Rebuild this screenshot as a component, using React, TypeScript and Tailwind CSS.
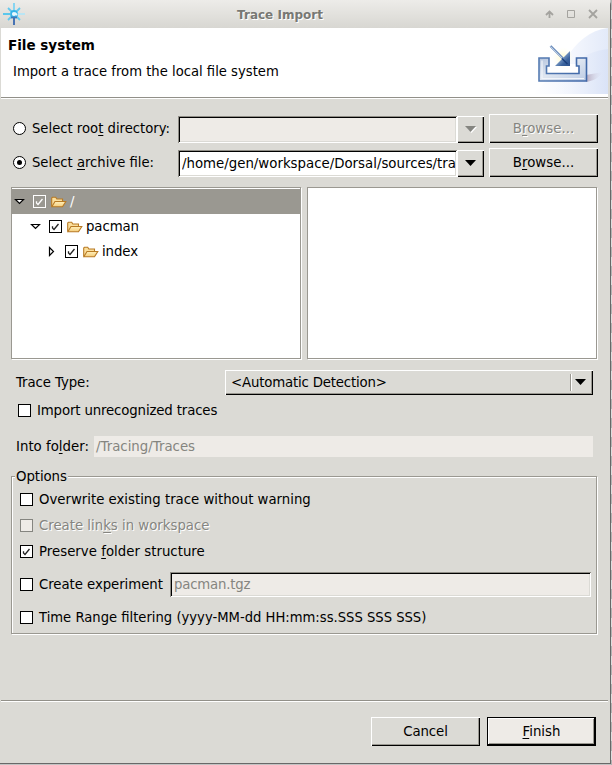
import type { ReactNode } from "react";

/* Bevelled frame helpers shared by buttons and fields */
const RAISED =
  "shadow-[inset_1px_1px_0_#fff,inset_-1px_-1px_0_#000,inset_-2px_-2px_0_#9a9891]";
const SUNKEN =
  "shadow-[inset_1px_1px_0_#8f8d86,inset_-1px_-1px_0_#fff,inset_2px_2px_0_#000,inset_-2px_-2px_0_#dbdad5]";
const ETCHED = "border border-[#9a9891] shadow-[1px_1px_0_#fff,inset_1px_1px_0_#fff]";
const DISABLED = "text-[#858580] [text-shadow:1px_1px_0_#fff]";

function Key({ children }: { children: ReactNode }) {
  return (
    <span className="underline decoration-1 underline-offset-2 [text-decoration-skip-ink:none]">{children}</span>
  );
}

function Button({ children, disabled }: { children: ReactNode; disabled?: boolean }) {
  return (
    <button className={`h-[29px] w-[109px] shrink-0 pb-px text-center ${RAISED} ${disabled ? DISABLED : ""}`}>
      {children}
    </button>
  );
}

function Check({ checked, tone = "normal" }: { checked?: boolean; tone?: "normal" | "disabled" | "selected" }) {
  const box =
    tone === "disabled"
      ? "border-[#858580] bg-[#eeebe7]"
      : tone === "selected"
        ? "border-white bg-[#9a9891]"
        : "border-black bg-white";
  return (
    <span className={`block size-[13px] shrink-0 border ${box}`}>
      {checked && (
        <svg width="11" height="11" viewBox="0 0 11 11" fill="none" className="block">
          <path d="M2.500 5.300V7L4 8.500L8.500 3" stroke={tone === "selected" ? "#fff" : "#222"} strokeWidth="1.3" />
        </svg>
      )}
    </span>
  );
}

function Radio({ checked }: { checked?: boolean }) {
  return (
    <span className="flex size-[13px] shrink-0 items-center justify-center rounded-full border border-black bg-white">
      {checked && <span className="size-[5px] rounded-full bg-black" />}
    </span>
  );
}

function Arrow({ color = "#000", light }: { color?: string; light?: boolean }) {
  return (
    <svg width="12" height="7" viewBox="0 0 12 7" className="block">
      {light && <path d="M1 1H12L6.5 7Z" fill="#fff" />}
      <path d="M0 0H11L5.5 6Z" fill={color} />
    </svg>
  );
}

function Folder() {
  return (
    <svg width="16" height="12" viewBox="0 0 16 12" className="block shrink-0">
      <defs>
        <linearGradient id="fold" x1="0" y1="0" x2="0" y2="1">
          <stop offset="0" stopColor="#fff0bd" />
          <stop offset="1" stopColor="#f4cc79" />
        </linearGradient>
      </defs>
      <path d="M0.700 10.500V2L1.500 1.200H4.700L5.800 3H11.500V6" fill="#fbdf9c" stroke="#b87a24" strokeWidth="1.1" />
      <path d="M0.800 10.700L4 5.500H14.800L11.500 10.700Z" fill="url(#fold)" stroke="#b87a24" strokeWidth="1.1" />
    </svg>
  );
}

function Expander({ open }: { open?: boolean }) {
  return (
    <svg width="11" height="11" viewBox="0 0 11 11" className="mb-px block shrink-0">
      {open ? (
        <path d="M1.500 3.500H9.500L5.500 7.500Z" fill="#fff" stroke="#000" strokeWidth="1.2" />
      ) : (
        <path d="M3.500 1.500V9.500L7.500 5.500Z" fill="#fff" stroke="#000" strokeWidth="1.2" />
      )}
    </svg>
  );
}

function TreeRow({ label, indent, open, selected }: { label: string; indent: string; open?: boolean; selected?: boolean }) {
  return (
    <div className={`flex h-[25px] items-center ${indent} ${selected ? "bg-[#9a9891] text-white" : ""}`}>
      <Expander open={open} />
      <span className="w-[8px] shrink-0" />
      <Check checked tone={selected ? "selected" : "normal"} />
      <span className="w-[5px] shrink-0" />
      <Folder />
      <span className="ml-[3px] pb-px tracking-[-0.1px]">{label}</span>
    </div>
  );
}

function PathRow({ label, value, active }: { label: ReactNode; value: string; active?: boolean }) {
  return (
    <div className="flex h-[29px] items-center">
      <Radio checked={active} />
      <span className="ml-[6px] w-[146px] shrink-0 whitespace-nowrap pb-px text-[13.2px]">{label}</span>
      <div
        className={`mt-px flex h-[27px] w-[279px] shrink-0 items-center overflow-hidden pl-[4px] pr-px ${SUNKEN} ${active ? "bg-white" : "bg-[#eeebe7]"}`}
      >
        <span className="block w-full overflow-hidden whitespace-nowrap">{value}</span>
      </div>
      <div className={`mt-px flex h-[27px] w-[27px] shrink-0 items-center justify-center ${RAISED}`}>
        <Arrow color={active ? "#000" : "#858580"} light={!active} />
      </div>
      <span className="w-[5px] shrink-0" />
      <Button disabled={!active}>
        B<Key>r</Key>owse...
      </Button>
    </div>
  );
}

function Option({ children, checked, disabled }: { children: ReactNode; checked?: boolean; disabled?: boolean }) {
  return (
    <div className="flex h-[17px] items-center whitespace-nowrap">
      <Check checked={checked} tone={disabled ? "disabled" : "normal"} />
      <span className={`ml-[6px] ${disabled ? DISABLED : ""}`}>{children}</span>
    </div>
  );
}

function AppLogo() {
  return (
    <svg width="22" height="24" viewBox="0 0 22 24" className="mt-px block">
      <g fill="none" strokeWidth="1.8">
        <path d="M11 0V7" stroke="#7dd3f2" />
        <path d="M0 11H7" stroke="#4cc4ee" />
        <path d="M15 11H22" stroke="#b5e6f7" />
        <path d="M5 5L9 9M17 5L13 9M5 17L9 13M13 13L17 17" stroke="#62c8ee" />
        <circle cx="11" cy="11" r="3" stroke="#35b4e8" strokeWidth="1.8" fill="#e8f8fe" />
        <path d="M12 10L14 12" stroke="#e8f8fe" />
        <path d="M11 14V22" stroke="#4773b4" strokeWidth="2" />
        <path d="M8 14.500H14" stroke="#3f77b8" />
      </g>
    </svg>
  );
}

function Banner() {
  return (
    <svg width="75" height="66" viewBox="0 0 75 66" className="block">
      <defs>
        <linearGradient id="sweep" x1="0" y1="0" x2="1" y2="0">
          <stop offset="0" stopColor="#fff" />
          <stop offset="0.55" stopColor="#f3f6fd" />
          <stop offset="1" stopColor="#e3eaf9" />
        </linearGradient>
        <linearGradient id="sweep2" x1="0" y1="0" x2="1" y2="0">
          <stop offset="0" stopColor="#f3f6fd" stopOpacity="0" />
          <stop offset="1" stopColor="#dae3f7" />
        </linearGradient>
        <linearGradient id="tray" x1="0" y1="0" x2="1" y2="1">
          <stop offset="0" stopColor="#b4c4dd" />
          <stop offset="0.45" stopColor="#e0e7f1" />
          <stop offset="1" stopColor="#bccbe4" />
        </linearGradient>
        <linearGradient id="edge" x1="0" y1="0" x2="1" y2="0">
          <stop offset="0" stopColor="#557bb2" />
          <stop offset="1" stopColor="#4068a8" />
        </linearGradient>
        <linearGradient id="head" x1="0" y1="0" x2="1" y2="1">
          <stop offset="0.3" stopColor="#a3bddc" />
          <stop offset="0.7" stopColor="#3b639e" />
          <stop offset="1" stopColor="#2b528f" />
        </linearGradient>
        <radialGradient id="glow">
          <stop offset="0" stopColor="#fff9c8" />
          <stop offset="1" stopColor="#fffef2" stopOpacity="0" />
        </radialGradient>
        <linearGradient id="shade" x1="0" y1="0" x2="1" y2="0">
          <stop offset="0" stopColor="#b5a9bd" />
          <stop offset="1" stopColor="#dfe5f6" stopOpacity="0" />
        </linearGradient>
      </defs>
      <path d="M0 66C10 55 24 46 33 31C43 14 57 2 75 0V66Z" fill="url(#sweep)" />
      <path d="M20 66C32 40 48 24 75 21V66Z" fill="url(#sweep2)" />
      <path d="M53 47L70 44C66 50 60 53 53 54Z" fill="url(#shade)" />
      <path d="M14 36V45H45V36" fill="#fff" />
      <circle cx="30" cy="30" r="11" fill="url(#glow)" />
      <path
        d="M6 30H16V38H13.500V45.500H46V38H43.500V30H53.500V53H6Z"
        fill="url(#tray)"
        stroke="url(#edge)"
        strokeWidth="1.6"
      />
      <path d="M9 32.500V50.500H51" fill="none" stroke="#f2f5fa" strokeWidth="1.2" />
      <path d="M17.500 18L31 31.500" stroke="#6f8fbd" strokeWidth="2.4" />
      <path d="M17.500 18.500L30 31" stroke="#c3d4ea" strokeWidth="0.9" />
      <path d="M37 23V38H22Z" fill="url(#head)" />
      <path d="M29 30.500L34.500 36" stroke="#1b3f7c" strokeWidth="1.5" />
    </svg>
  );
}

export default function App() {
  return (
    <div className="flex h-[765px] w-[612px] overflow-hidden bg-[#c3c3c3] font-['DejaVu_Sans',sans-serif] text-[13.333px] leading-[17px] text-black">
      <div className="flex h-[764px] w-[611px] shrink-0 flex-col rounded-tr-[5px] border-b border-r border-[#686868] bg-[#dbdad5]">
        <header className="flex h-[28px] shrink-0 items-center bg-linear-to-b from-[#edece9] to-[#d8d7d2]">
          <div className="w-[100px] pl-[3px]">
            <AppLogo />
          </div>
          <h1 className="grow pt-[2px] text-center text-[12px] font-bold text-[#787874] [text-shadow:1px_1px_0_#fff]">
            Trace Import
          </h1>
          <div className="flex w-[150px] items-center justify-end gap-[13px] pr-[12px] text-[#a4a39f]">
            <svg width="9" height="9" viewBox="0 0 9 9" fill="none" stroke="currentColor">
              <path d="M4.500 8V2M1 5L4.500 1.500L8 5" strokeWidth="1.800" />
            </svg>
            <svg width="8" height="8" viewBox="0 0 8 8" fill="none" stroke="currentColor">
              <path d="M0.500 0.500H7.500V7.500H0.500Z" />
            </svg>
            <svg width="10" height="10" viewBox="0 0 10 10" fill="none" stroke="currentColor">
              <path d="M1 1L9 9M9 1L1 9" strokeWidth="1.800" />
            </svg>
          </div>
        </header>

        <section className="ml-px mr-[2px] flex h-[71px] shrink-0 justify-between border-b border-white bg-white shadow-[inset_0_-1px_0_#929089]">
          <div className="pl-[7px] pt-[9px]">
            <h2 className="text-[13.5px] font-bold">File system</h2>
            <p className="pl-[5px] pt-[9px] text-[13.18px]">Import a trace from the local file system</p>
          </div>
          <Banner />
        </section>

        <main className="flex flex-col pl-[11px] pr-[12px] pt-[15px]">
          <div className="flex flex-col gap-[5px] pl-[2px]">
            <PathRow label={<>Select roo<Key>t</Key> directory:</>} value="" />
            <PathRow label={<>Select <Key>a</Key>rchive file:</>} value="/home/gen/workspace/Dorsal/sources/tra" active />
          </div>

          <div className="mt-[10px] flex gap-[6px]">
            <div className={`h-[172px] w-[290px] bg-white pt-px ${ETCHED}`}>
              <TreeRow label="/" indent="pl-[2px]" open selected />
              <TreeRow label="pacman" indent="pl-[18px]" open />
              <TreeRow label="index" indent="pl-[34px]" />
            </div>
            <div className={`h-[172px] w-[290px] bg-white ${ETCHED}`} />
          </div>

          <div className="mt-[11px] flex h-[25px] items-center pl-[5px]">
            <span className="w-[209px] tracking-[-0.1px]">Trace Type:</span>
            <div className={`flex h-[25px] w-[368px] items-center pl-[6px] pr-[6px] ${RAISED}`}>
              <span className="grow tracking-[-0.19px]">&lt;Automatic Detection&gt;</span>
              <span className="mr-[3px] h-[17px] w-[2px] border-l border-r border-l-[#9a9891] border-r-white" />
              <Arrow />
            </div>
          </div>

          <div className="mt-[7px] pl-[7px] tracking-[-0.15px]">
            <Option>Import unrecognized traces</Option>
          </div>

          <div className="mt-[17px] flex h-[21px] items-center pl-[5px]">
            <span className="w-[78px] whitespace-nowrap">
              Into fo<Key>l</Key>der:
            </span>
            <div className="h-[21px] w-[499px] bg-[#eeebe7] pl-[2px] pt-[2px] text-[#858580]">/Tracing/Traces</div>
          </div>

          <section className={`mt-[19px] h-[158px] w-[586px] ${ETCHED}`}>
            <h3 className="-mt-[9px] ml-[3px] w-[53px] whitespace-nowrap bg-[#dbdad5] pl-px tracking-[-0.1px]">Options</h3>
            <div className="flex flex-col pl-[8px] pt-[6px] text-[13.29px]">
              <Option>Overwrite existing trace without warning</Option>
              <div className="h-[9px]" />
              <Option disabled>
                Create lin<Key>k</Key>s in workspace
              </Option>
              <div className="h-[9px]" />
              <Option checked>
                <span className="tracking-[0.03px]">
                  Preserve <Key>f</Key>older structure
                </span>
              </Option>
              <div className="mt-[12px] flex h-[25px] items-center">
                <div className="w-[150px] tracking-[-0.05px]">
                  <Option>Create experiment</Option>
                </div>
                <div
                  className={`h-[25px] w-[421px] bg-[#eeebe7] pl-[4px] pt-[4px] tracking-[-0.2px] text-[#858580] ${SUNKEN}`}
                >
                  pacman.tgz
                </div>
              </div>
              <div className="h-[12px]" />
              <div className="text-[13.16px]">
                <Option>Time Range filtering (yyyy-MM-dd HH:mm:ss.SSS SSS SSS)</Option>
              </div>
            </div>
          </section>
        </main>

        <footer className="ml-px mr-[2px] mt-auto flex h-[63px] shrink-0 justify-end gap-[7px] border-t border-[#929089] pr-[12px] pt-[16px] shadow-[inset_0_1px_0_#fff]">
          <Button>
            <span className="tracking-[-0.1px]">Cancel</span>
          </Button>
          <button className="h-[29px] w-[109px] bg-[#eeebe7] pb-px text-center shadow-[inset_1px_1px_0_#000,inset_-2px_-2px_0_#000,inset_2px_2px_0_#fff,inset_-3px_-3px_0_#9a9891]">
            <Key>F</Key>inish
          </button>
        </footer>
      </div>
      <div className="h-full w-px bg-[repeating-linear-gradient(to_bottom,#b4b4b4_0px,#b4b4b4_10px,#dedede_10px,#dedede_19px)]" />
    </div>
  );
}
